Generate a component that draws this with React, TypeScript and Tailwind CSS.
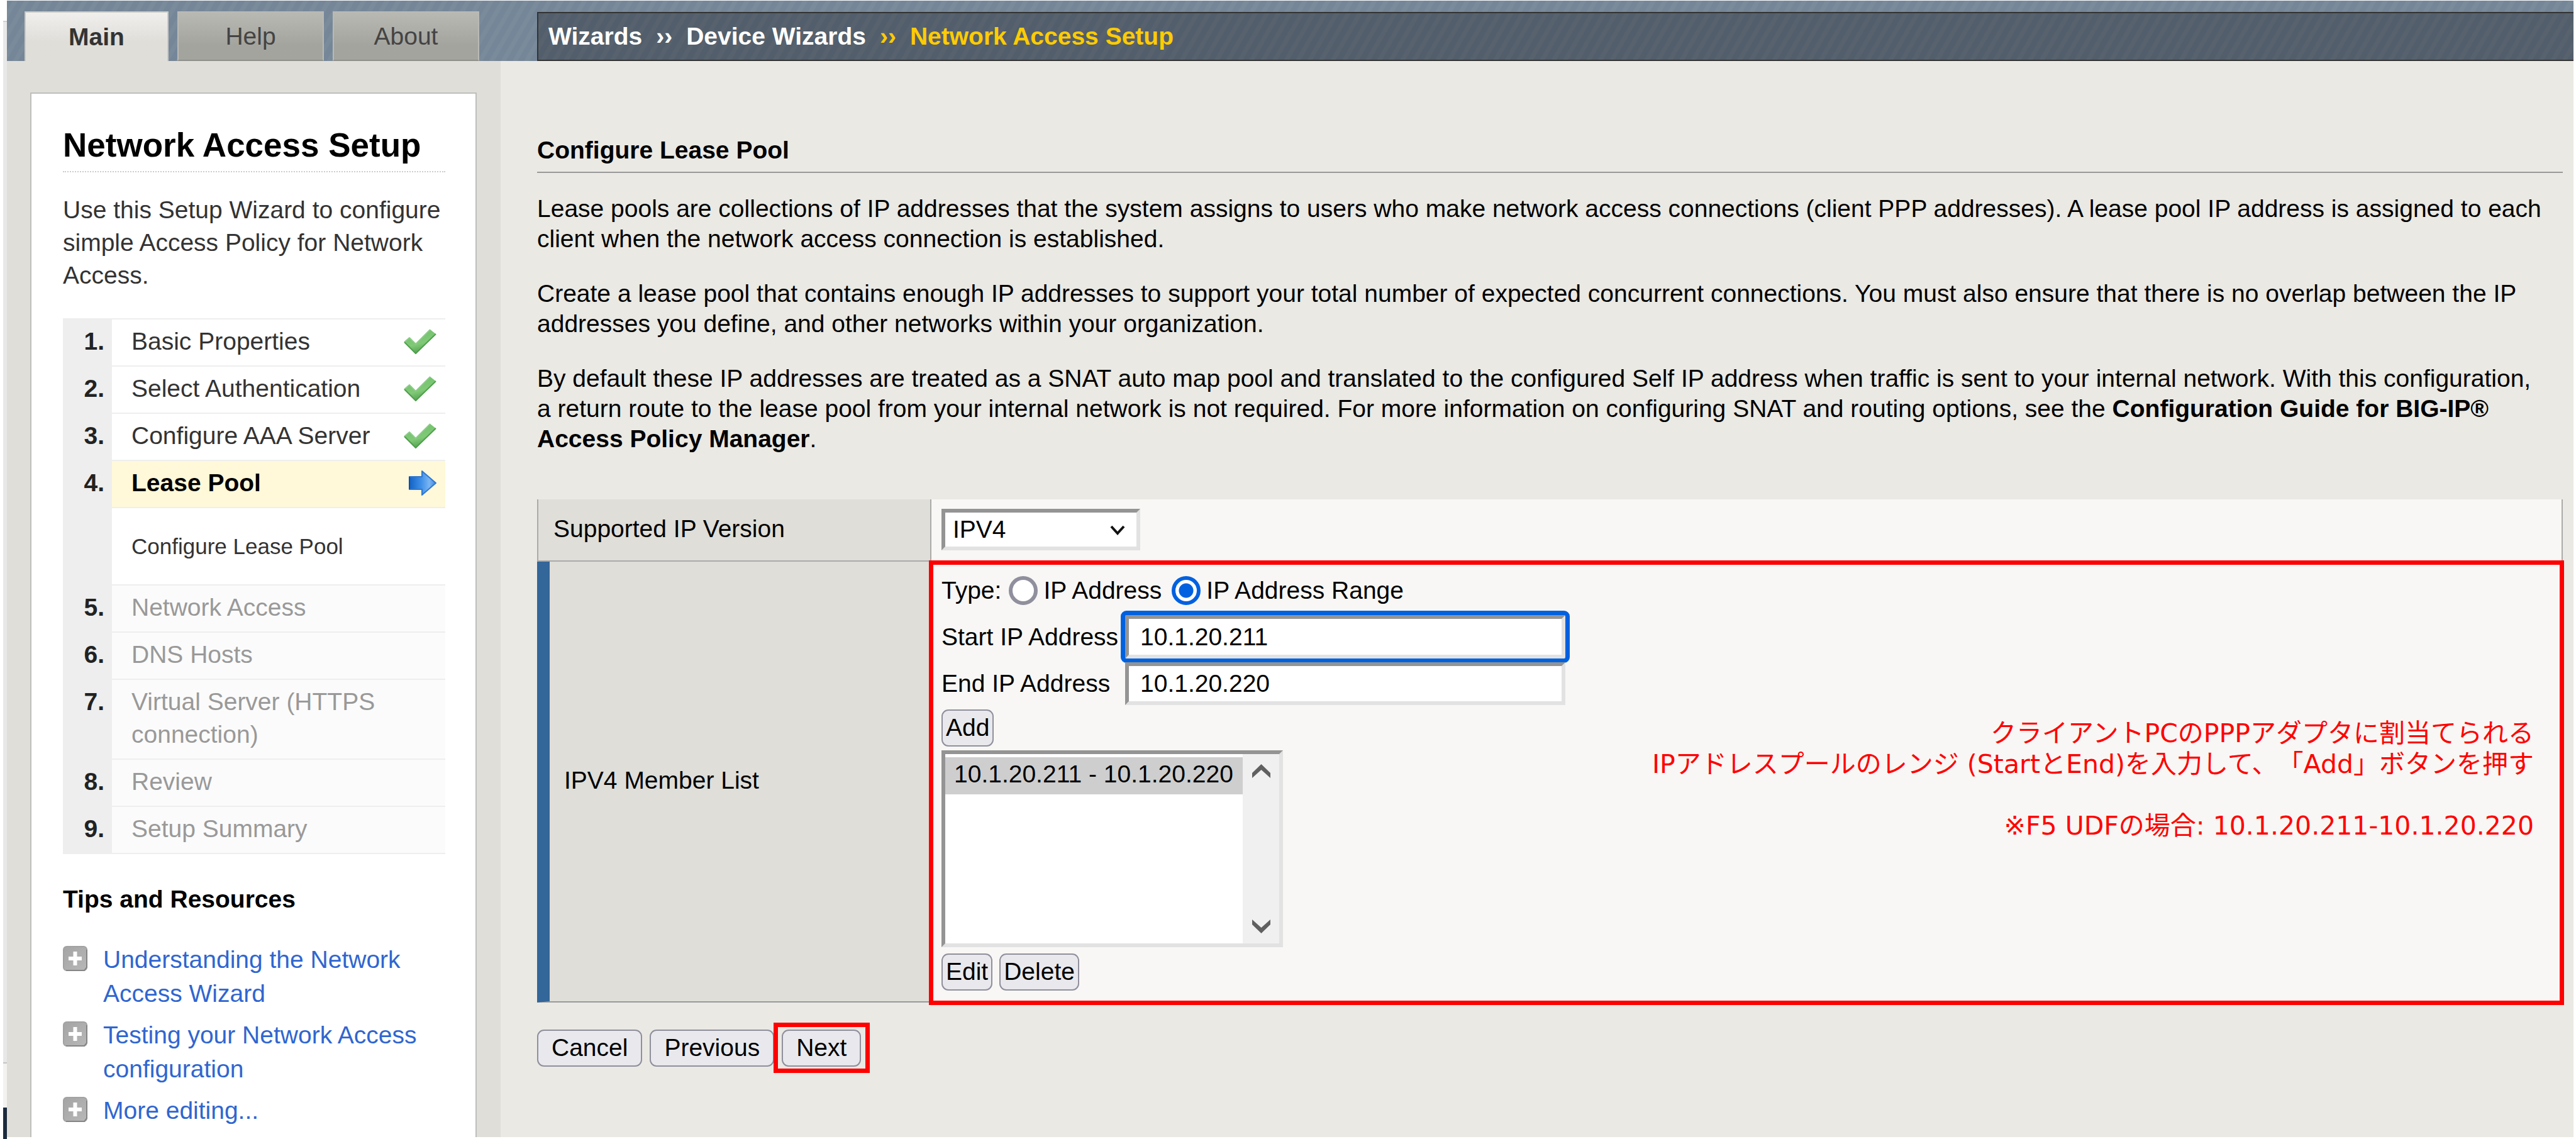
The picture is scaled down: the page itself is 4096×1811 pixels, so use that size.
import { useState } from "react";
import type { ReactNode } from "react";

const FONT = "font-['Liberation_Sans',Arial,sans-serif]";

function Check() {
  return (
    <svg viewBox="0 0 52 41" className="h-[41px] w-[52px] shrink-0" aria-hidden="true">
      <defs>
        <linearGradient id="check" x1="0.2" y1="0" x2="0.55" y2="1">
          <stop offset="0" stopColor="#6fbf6b" />
          <stop offset="0.6" stopColor="#80c977" />
          <stop offset="1" stopColor="#4a9a48" />
        </linearGradient>
      </defs>
      <path d="M1 21 L9 14 L19 24 L42 1 L51 8 L19 40 Z" fill="url(#check)" />
      <path d="M1 21 L9 14 L19 24 L42 1" fill="none" stroke="#8ccb88" strokeWidth="2" strokeLinejoin="round" />
      <path d="M1 21 L19 39 L51 8" fill="none" stroke="#4f9f4c" strokeWidth="2" strokeLinejoin="round" />
    </svg>
  );
}

function Arrow() {
  return (
    <svg viewBox="0 0 44 40" className="h-[40px] w-[44px] shrink-0" aria-hidden="true">
      <defs>
        <linearGradient id="arrow" x1="0" y1="0" x2="1" y2="0">
          <stop offset="0" stopColor="#1262c4" />
          <stop offset="0.45" stopColor="#3f90e8" />
          <stop offset="0.75" stopColor="#7ab5f2" />
          <stop offset="1" stopColor="#3f86da" />
        </linearGradient>
      </defs>
      <path d="M1 10 H21 V1 L43 20 L21 39 V30 H1 Z" fill="url(#arrow)" stroke="#2f78d0" strokeWidth="2" strokeLinejoin="round" />
      <path d="M1 10 V30" stroke="#0b4fae" strokeWidth="2" />
    </svg>
  );
}

function Plus() {
  return (
    <svg viewBox="0 0 39 40" className="mt-[5px] h-[40px] w-[39px] shrink-0" aria-hidden="true">
      <defs>
        <linearGradient id="plus" x1="0" y1="0" x2="1" y2="1">
          <stop offset="0" stopColor="#a4a4a4" />
          <stop offset="1" stopColor="#b8b8b8" />
        </linearGradient>
      </defs>
      <rect x="1" y="1" width="37" height="38" rx="5" fill="url(#plus)" stroke="#a2a2a2" strokeWidth="2" />
      <path d="M38 6 V34 L34 39 H5" fill="none" stroke="#858585" strokeWidth="2" />
      <path d="M16.5 9 H22.5 V17 H30 V23 H22.5 V31 H16.5 V23 H9 V17 H16.5 Z" fill="#fff" />
    </svg>
  );
}

function Step({ n, children, icon, state = "done" }: { n: string; children: ReactNode; icon?: ReactNode; state?: "done" | "current" | "todo" }) {
  const tone =
    state === "current" ? "bg-[#fff8d9] font-bold text-black" : state === "todo" ? "bg-[#fbfbfb] text-[#999]" : "bg-white text-[#333]";
  return (
    <li className="flex">
      <span className="w-[78px] shrink-0 bg-[#eee] pt-[9px] pr-[12px] text-right font-bold text-[#222]">{n}.</span>
      <div className={"flex flex-1 items-start justify-between border-b-2 border-[#eee] pt-[9px] pr-[14px] pb-[12px] pl-[31px] " + tone}>
        <span className="min-w-0">{children}</span>
        {icon ? <span className="flex h-[52px] items-center">{icon}</span> : null}
      </div>
    </li>
  );
}

function Tab({ children, active }: { children: ReactNode; active?: boolean }) {
  const tone = active
    ? "border-x-2 border-t-2 border-[#c9c8c4] border-b-0 bg-linear-to-b from-[#f0efed] to-[#dfded9] to-60% font-bold text-[#333] w-[229px]"
    : "border-2 border-[#b9b9b4] border-b-[#8f8f8b] bg-linear-to-b from-[#b9b9b4] to-[#a4a49e] to-70% text-[#444] w-[233px]";
  return <button type="button" className={"h-[79px] leading-[75px] " + tone}>{children}</button>;
}

function PushButton({ children, wide }: { children: ReactNode; wide?: boolean }) {
  return (
    <button
      type="button"
      className={"h-[59px] rounded-[11px] border-2 border-[#8f8f9d] bg-[#e9e9ed] pb-[2px] leading-[48px] text-black " + (wide ? "px-[21px]" : "px-[5px]")}
    >
      {children}
    </button>
  );
}

const INSET = "border-[6px] border-t-[#949494] border-l-[#949494] border-r-[#e2e2e2] border-b-[#e2e2e2] bg-white";

function Radio({ label, checked, onChange }: { label: string; checked: boolean; onChange: () => void }) {
  return (
    <label className="flex items-center gap-[9px]">
      <input
        type="radio"
        name="type"
        checked={checked}
        onChange={onChange}
        className="size-[46px] appearance-none rounded-full border-[6px] border-[#8f8f9d] bg-white checked:border-[#0061e0] checked:bg-[radial-gradient(circle,#0061e0_0_11px,#fff_12px)]"
      />
      {label}
    </label>
  );
}

export default function App() {
  const [range, setRange] = useState(true);
  const [start, setStart] = useState("10.1.20.211");
  const [end, setEnd] = useState("10.1.20.220");

  return (
    <div className={"flex min-h-screen bg-white pt-px pr-[4px] text-[39px] leading-[52px] text-black " + FONT}>
      <div className="flex w-[11px] shrink-0 flex-col pl-[5px]">
        <div className="h-[34px] border-b-2 border-[#d0d0d0] bg-white" />
        <div className="flex-1 bg-[#e8e8e8]" />
        <div className="h-[72px] border-t-2 border-[#c4c4c4] bg-[#f3f2f0]" />
        <div className="h-[50px] bg-[#1b2a3d]" />
      </div>

      <div className="flex min-w-0 flex-1 flex-col">
        <header className="flex h-[96px] items-end bg-[#758698] bg-[repeating-linear-gradient(120deg,#758698_0_7px,#7a8b9b_9px_14px,#758698_16px)]">
          <nav className="flex w-[843px] shrink-0 gap-[14px] pl-[28px]">
            <Tab active>Main</Tab>
            <Tab>Help</Tab>
            <Tab>About</Tab>
          </nav>
          <div className="flex h-[78px] flex-1 items-center gap-[22px] border-2 border-r-0 border-[#333] bg-[#535f6c] bg-[repeating-linear-gradient(120deg,#525e6b_0_7px,#57626e_9px_14px,#525e6b_16px)] pl-[16px] font-bold text-white">
            <a href="#wizards">Wizards</a>
            <span>››</span>
            <a href="#device">Device Wizards</a>
            <span className="text-[#ffcc00]">››</span>
            <span className="text-[#ffcc00]">Network Access Setup</span>
          </div>
        </header>

        <div className="flex flex-1">
          <aside className="w-[785px] shrink-0 bg-[#dfded9] pt-[50px] pr-[38px] pl-[37px]">
            <div className="h-full border-2 border-b-0 border-[#bebebb] bg-white pt-[50px] pr-[48px] pl-[50px]">
              <h1 className="border-b-2 border-dotted border-[#ccc] pb-[9px] text-[53px] leading-[64px] font-bold">Network Access Setup</h1>
              <p className="mt-[34px] text-[#333]">
                Use this Setup Wizard to configure simple Access Policy for Network Access.
              </p>
              <ol className="mt-[42px] border-t-2 border-[#eee]">
                <Step n="1" icon={<Check />}>Basic Properties</Step>
                <Step n="2" icon={<Check />}>Select Authentication</Step>
                <Step n="3" icon={<Check />}>Configure AAA Server</Step>
                <Step n="4" state="current" icon={<Arrow />}>Lease Pool</Step>
                <li className="flex">
                  <span className="w-[78px] shrink-0 bg-[#eee]" />
                  <div className="flex h-[123px] flex-1 items-center border-b-2 border-[#eee] pl-[31px] text-[35px] text-[#333]">Configure Lease Pool</div>
                </li>
                <Step n="5" state="todo">Network Access</Step>
                <Step n="6" state="todo">DNS Hosts</Step>
                <Step n="7" state="todo">Virtual Server (HTTPS connection)</Step>
                <Step n="8" state="todo">Review</Step>
                <Step n="9" state="todo">Setup Summary</Step>
              </ol>
              <h2 className="mt-[46px] font-bold">Tips and Resources</h2>
              <ul className="mt-[43px] flex flex-col gap-[12px] leading-[54px]">
                {["Understanding the Network Access Wizard", "Testing your Network Access configuration", "More editing..."].map((t) => (
                  <li key={t} className="flex items-start gap-[25px]">
                    <Plus />
                    <a href="#tips" className="text-[#2f66d0]">{t}</a>
                  </li>
                ))}
              </ul>
            </div>
          </aside>

          <main className="min-w-0 flex-1 bg-[#eae9e4] pt-[118px] pr-[17px] pl-[58px] leading-[48px]">
            <h2 className="border-b-2 border-[#999] pb-[10px] font-bold">Configure Lease Pool</h2>
            <div className="mt-[33px] flex flex-col gap-[39px]">
              <p>
                Lease pools are collections of IP addresses that the system assigns to users who make network access connections (client PPP
                addresses). A lease pool IP address is assigned to each client when the network access connection is established.
              </p>
              <p>
                Create a lease pool that contains enough IP addresses to support your total number of expected concurrent connections. You must
                also ensure that there is no overlap between the IP addresses you define, and other networks within your organization.
              </p>
              <p>
                By default these IP addresses are treated as a SNAT auto map pool and translated to the configured Self IP address when traffic is
                sent to your internal network. With this configuration,
                <br />
                a return route to the lease pool from your internal network is not required. For more information on configuring SNAT and routing
                options, see the <b>Configuration Guide for BIG-IP®</b>
                <br />
                <b>Access Policy Manager</b>.
              </p>
            </div>

            <table className="mt-[72px] w-full border-separate border-spacing-0">
              <tbody>
                <tr>
                  <th scope="row" className="h-[99px] w-[627px] border-x-2 border-b-2 border-[#aaa] bg-[#dfded9] pb-[3px] pl-[24px] text-left align-middle font-normal">
                    <label htmlFor="version">Supported IP Version</label>
                  </th>
                  <td className="border-r-2 border-[#aaa] bg-[#f8f7f5] pb-[4px] pl-[16px] align-middle">
                    <div className="relative w-[316px]">
                      <select id="version" className={"block h-[66px] w-full appearance-none pl-[12px] " + INSET}>
                        <option>IPV4</option>
                      </select>
                      <svg viewBox="0 0 24 16" className="pointer-events-none absolute top-[26px] right-[24px] h-[16px] w-[24px]" aria-hidden="true">
                        <path d="M2 2 L12 13 L22 2" fill="none" stroke="#111" strokeWidth="4" />
                      </svg>
                    </div>
                  </td>
                </tr>
                <tr>
                  <th scope="row" className="border-b-2 border-l-[20px] border-[#999] border-l-[#336699] bg-[#dfded9] pb-[3px] pl-[23px] text-left align-middle font-normal">
                    IPV4 Member List
                  </th>
                  <td className="relative border-b-2 border-[#999] bg-[#f8f7f5] pt-[22px] pb-[17px] pl-[16px] align-top">
                    <div className="pointer-events-none absolute -top-[2px] -right-[2px] -bottom-[6px] -left-[4px] border-[7px] border-[#f00]" />
                    <div className="flex items-center gap-[12px]">
                      <span>Type:</span>
                      <div className="flex gap-[16px]">
                        <Radio label="IP Address" checked={!range} onChange={() => setRange(false)} />
                        <Radio label="IP Address Range" checked={range} onChange={() => setRange(true)} />
                      </div>
                    </div>
                    <div className="mt-[15px] flex items-center">
                      <label htmlFor="start" className="w-[292px]">Start IP Address</label>
                      <input
                        id="start"
                        value={start}
                        onChange={(e) => setStart(e.target.value)}
                        className={"h-[69px] w-[700px] rounded-[2px] pl-[18px] outline-[7px] outline-[#0061e0] " + INSET}
                      />
                    </div>
                    <div className="mt-[6px] flex items-center">
                      <label htmlFor="end" className="w-[292px]">End IP Address</label>
                      <input id="end" value={end} onChange={(e) => setEnd(e.target.value)} className={"h-[68px] w-[700px] rounded-none pl-[18px] outline-none " + INSET} />
                    </div>
                    <div className="mt-[7px] flex">
                      <PushButton>Add</PushButton>
                    </div>
                    <div className={"mt-[6px] flex h-[313px] w-[543px] " + INSET}>
                      <select size={4} aria-label="IPV4 Member List" defaultValue="a" className="flex-1 appearance-none overflow-hidden pt-[5px] outline-none">
                        <option value="a" className="h-[59px] bg-[#cecece] bg-linear-to-b from-[#cecece] to-[#cecece] px-[14px] pt-[5px] text-black">10.1.20.211 - 10.1.20.220</option>
                      </select>
                      <div className="flex w-[58px] flex-col items-center justify-between bg-[#f0f0f0] py-[16px]">
                        <svg viewBox="0 0 29 22" className="h-[22px] w-[29px]" aria-hidden="true">
                          <path d="M0 14 L14.5 0 L29 14 V22 L14.5 9 L0 22 Z" fill="#606060" />
                        </svg>
                        <svg viewBox="0 0 29 22" className="h-[22px] w-[29px]" aria-hidden="true">
                          <path d="M0 8 L14.5 22 L29 8 V0 L14.5 13 L0 0 Z" fill="#606060" />
                        </svg>
                      </div>
                    </div>
                    <div className="mt-[10px] flex gap-[11px]">
                      <PushButton>Edit</PushButton>
                      <PushButton>Delete</PushButton>
                    </div>
                    <p className="absolute top-[249px] right-[46px] text-right font-['DejaVu_Sans','Noto_Sans_CJK_JP',sans-serif] text-[41px] leading-[49px] text-[#f00] [text-spacing-trim:space-all]">
                      クライアントPCのPPPアダプタに割当てられる
                      <br />
                      IPアドレスプールのレンジ (StartとEnd)を入力して、「Add」ボタンを押す
                      <br />
                      <br />
                      ※F5 UDFの場合: 10.1.20.211-10.1.20.220
                    </p>
                  </td>
                </tr>
              </tbody>
            </table>

            <div className="mt-[43px] flex gap-[12px]">
              <PushButton wide>Cancel</PushButton>
              <PushButton wide>Previous</PushButton>
              <div className="relative">
                <PushButton wide>Next</PushButton>
                <div className="pointer-events-none absolute -top-[11px] -right-[14px] -bottom-[10px] -left-[13px] border-[7px] border-[#f00]" />
              </div>
            </div>
          </main>
        </div>
        <div className="h-[3px] bg-white" />
      </div>
    </div>
  );
}
